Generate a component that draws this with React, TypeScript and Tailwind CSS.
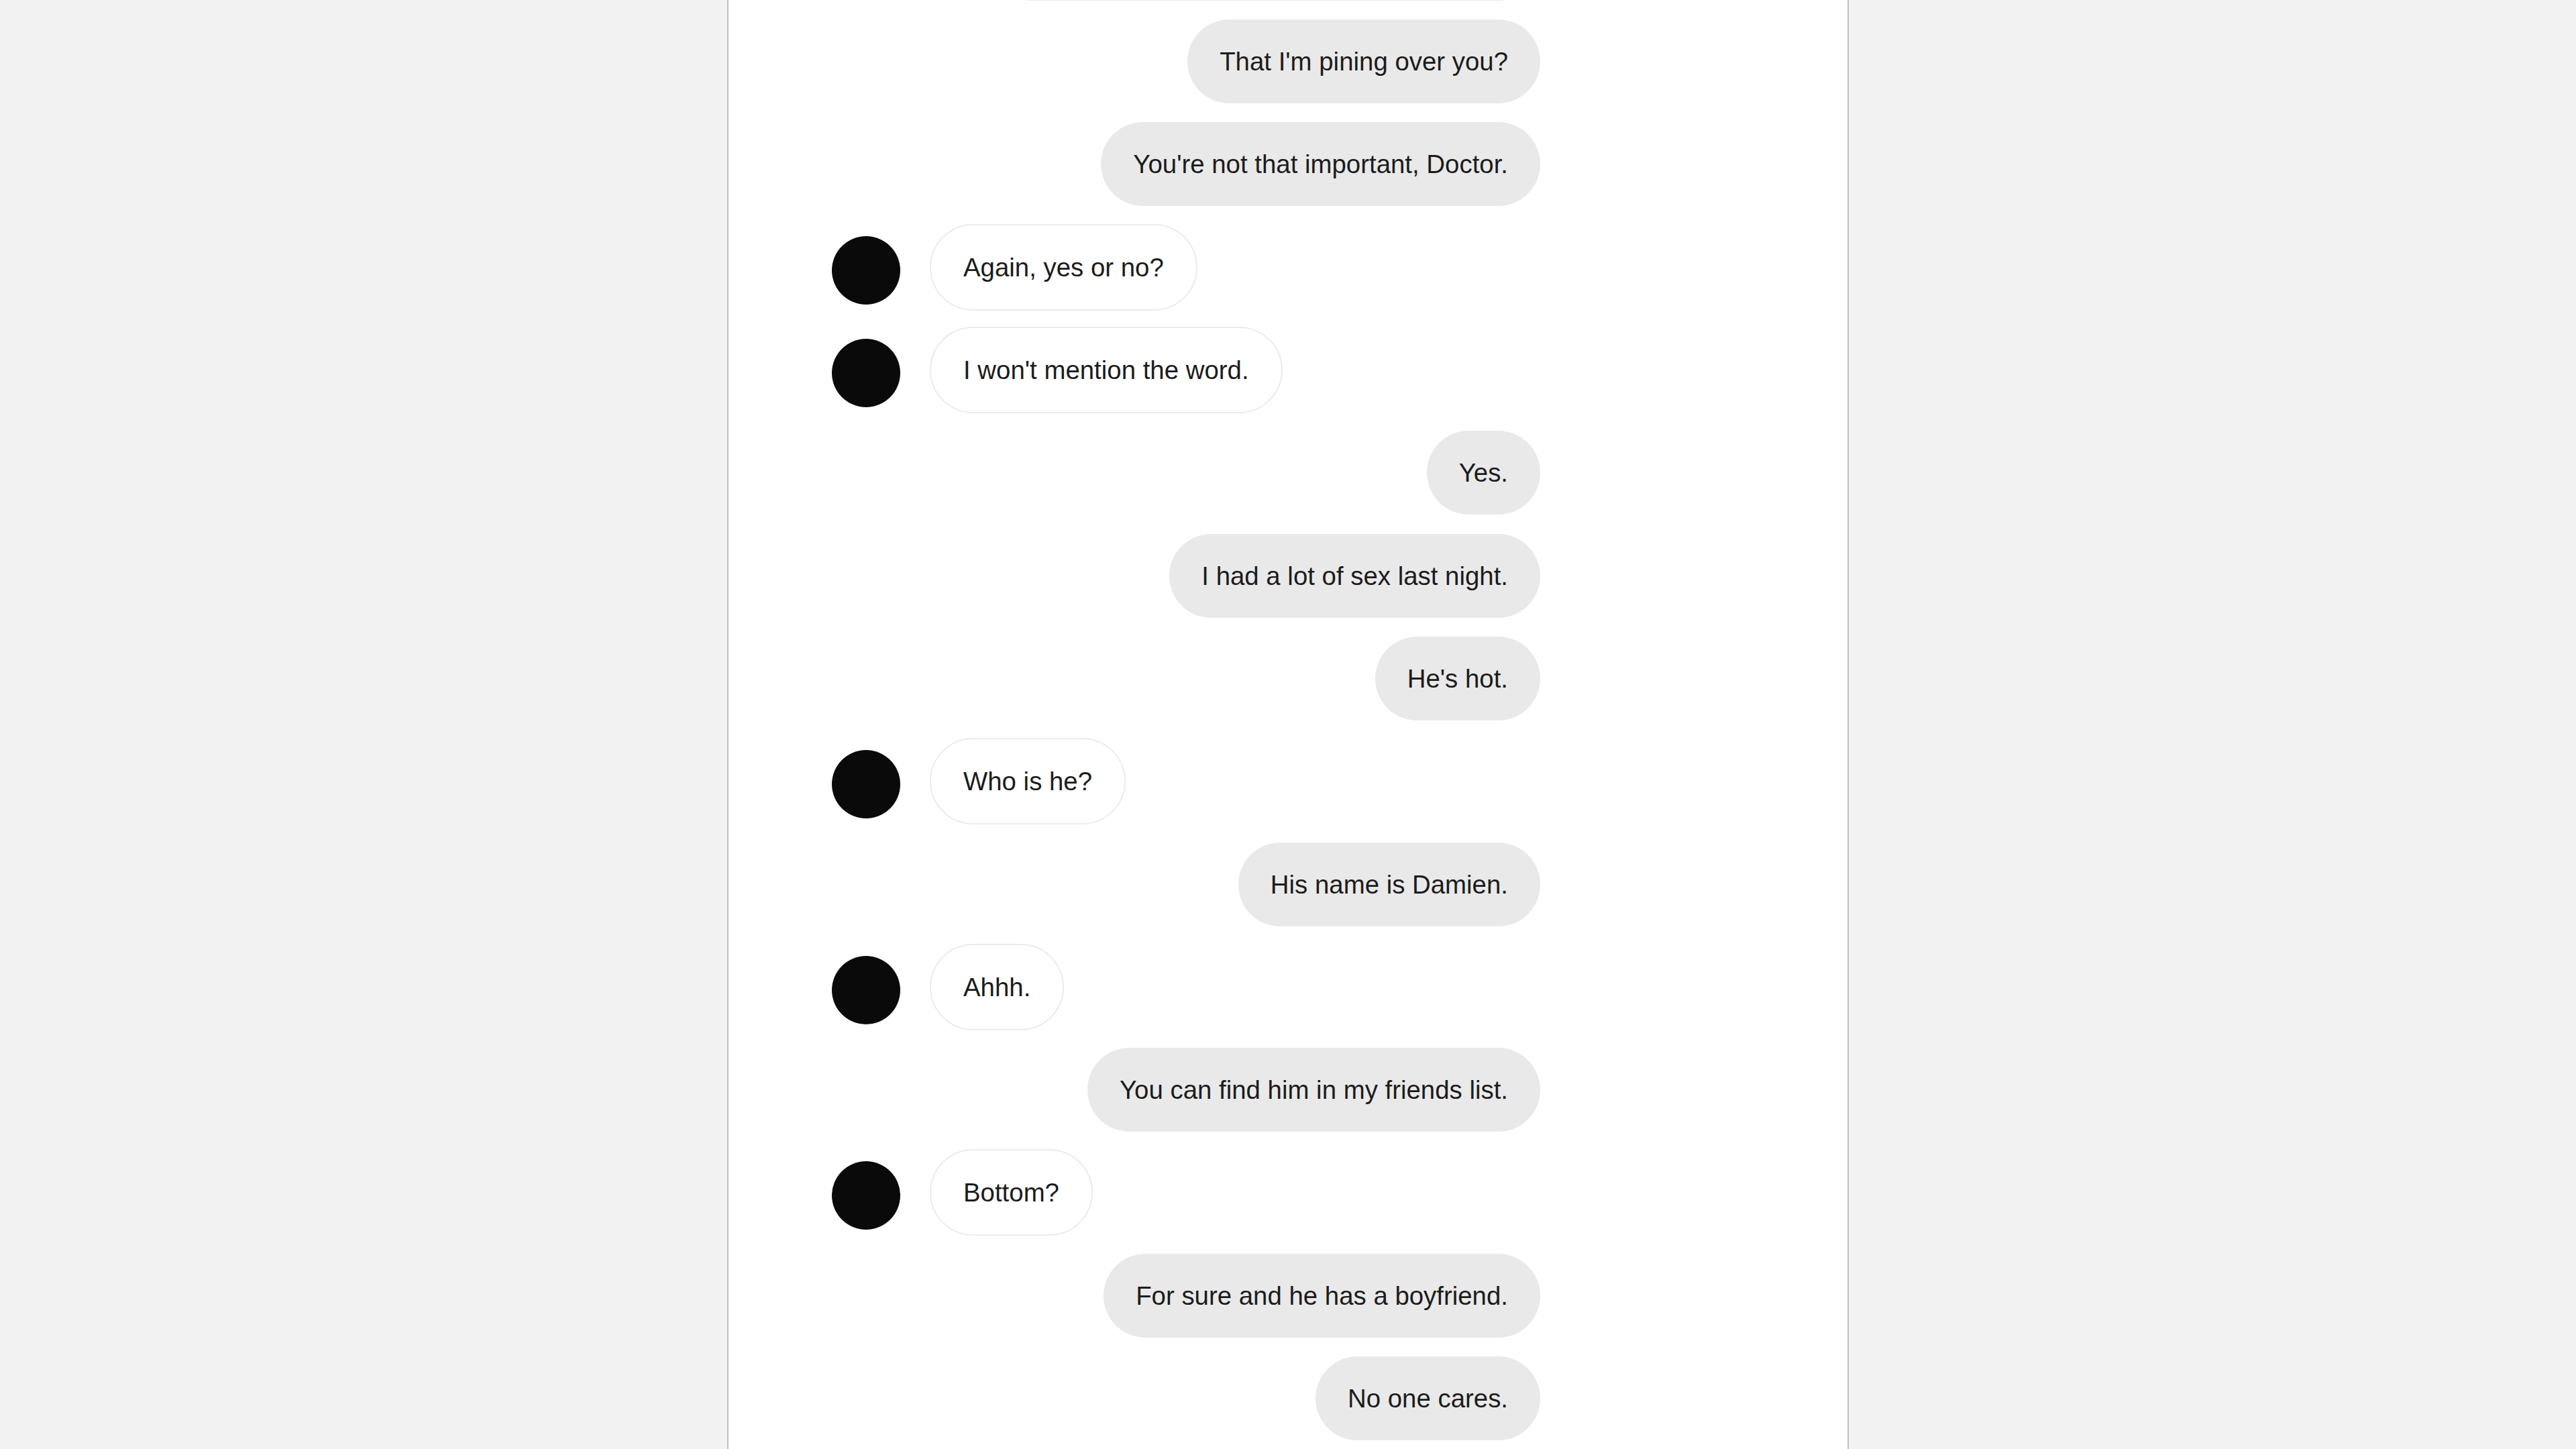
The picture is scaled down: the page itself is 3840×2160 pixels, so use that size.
import React from 'react';

interface Message {
    mine: boolean;
    text: string;
}

const messages: Message[] = [
    { mine: true, text: "So what, you think I'm jealous of him now?" },
    { mine: true, text: "That I'm pining over you?" },
    { mine: true, text: "You're not that important, Doctor." },
    { mine: false, text: 'Again, yes or no?' },
    { mine: false, text: "I won't mention the word." },
    { mine: true, text: 'Yes.' },
    { mine: true, text: 'I had a lot of sex last night.' },
    { mine: true, text: "He's hot." },
    { mine: false, text: 'Who is he?' },
    { mine: true, text: 'His name is Damien.' },
    { mine: false, text: 'Ahhh.' },
    { mine: true, text: 'You can find him in my friends list.' },
    { mine: false, text: 'Bottom?' },
    { mine: true, text: 'For sure and he has a boyfriend.' },
    { mine: true, text: 'No one cares.' },
];

const ChatRow: React.FC<{ message: Message }> = ({ message }) => {
    if (message.mine) {
        return (
            <div className="flex min-h-[129px] items-center justify-end">
                <div className="rounded-full bg-[#e9e9e9] px-[48px] py-[34px] leading-[57px] whitespace-nowrap">
                    {message.text}
                </div>
            </div>
        );
    }

    // avatar sits a little low next to the bubble
    return (
        <div className="flex min-h-[129px] items-center gap-[44px]">
            <div className="mt-[9px] size-[102px] shrink-0 rounded-full bg-[#0a0a0a]" />
            <div className="rounded-full border-2 border-[#ebebeb] bg-white px-[48px] py-[34px] leading-[57px] whitespace-nowrap">
                {message.text}
            </div>
        </div>
    );
};

export default function App() {
    return (
        <div className="min-h-screen bg-[#f2f2f2] font-['Liberation_Sans',Arial,sans-serif] text-[38.4px] text-[#1c1c1c]">
            <div className="mx-auto flex h-screen w-[1672px] flex-col justify-end overflow-hidden border-x-2 border-[#bdbdbd] bg-white pb-[11px] pl-[154px]">
                <div className="flex w-[1056px] flex-col gap-[24.3px]">
                    {messages.map((m, i) => (
                        <ChatRow key={i} message={m} />
                    ))}
                </div>
            </div>
        </div>
    );
}
